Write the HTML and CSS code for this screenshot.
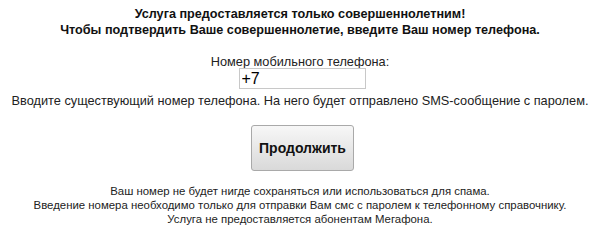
FILE: index.html
```html
<!DOCTYPE html>
<html lang="ru">
<head>
<meta charset="utf-8">
<title>Подтверждение</title>
<link rel="stylesheet" href="styles.css">
</head>
<body>
<div class="page">
  <div class="intro">
    <div>Услуга предоставляется только совершеннолетним!</div>
    <div>Чтобы подтвердить Ваше совершеннолетие, введите Ваш номер телефона.</div>
  </div>
  <div class="form">
    <label class="label" for="phone">Номер мобильного телефона:</label>
    <input class="phone" id="phone" type="text" value="+7">
    <div class="hint">Вводите существующий номер телефона. На него будет отправлено SMS-сообщение с паролем.</div>
    <button class="submit" type="button">Продолжить</button>
  </div>
  <div class="notes">
    <div>Ваш номер не будет нигде сохраняться или использоваться для спама.</div>
    <div>Введение номера необходимо только для отправки Вам смс с паролем к телефонному справочнику.</div>
    <div>Услуга не предоставляется абонентам Мегафона.</div>
  </div>
</div>
</body>
</html>
```
FILE: styles.css
```css
html, body {
  margin: 0;
  padding: 0;
  background: #fff;
}
body {
  font-family: "Liberation Sans", Arial, sans-serif;
  color: #000;
  font-size: 13px;
}
.page {
  width: 600px;
  text-align: center;
  padding-top: 6px;
}
.intro {
  font-weight: bold;
  font-size: 12.65px;
  line-height: 16px;
  color: #111;
}
.form {
  margin-top: 17px;
  display: flex;
  flex-direction: column;
  align-items: center;
}
.label {
  font-size: 12.75px;
  line-height: 13px;
  color: #222;
}
.phone {
  box-sizing: border-box;
  width: 127px;
  height: 21px;
  margin: 0 0 0 4px;
  padding: 0 2px;
  border: 1px solid #c8c8c8;
  font-family: "Liberation Sans", Arial, sans-serif;
  font-size: 16px;
  color: #000;
  outline: none;
}
.hint {
  font-size: 12.75px;
  line-height: 15px;
  margin-top: 4px;
  color: #222;
}
.submit {
  box-sizing: border-box;
  width: 103px;
  height: 46px;
  margin-top: 17px;
  margin-left: 5px;
  border: 1px solid #a9a9a9;
  border-radius: 3px;
  background: linear-gradient(#f7f7f7, #d9d9d9);
  font-family: "Liberation Sans", Arial, sans-serif;
  font-weight: bold;
  font-size: 14px;
  color: #111;
  padding: 0;
}
.notes {
  margin-top: 13px;
  font-size: 11.4px;
  line-height: 14px;
  color: #222;
}
```
